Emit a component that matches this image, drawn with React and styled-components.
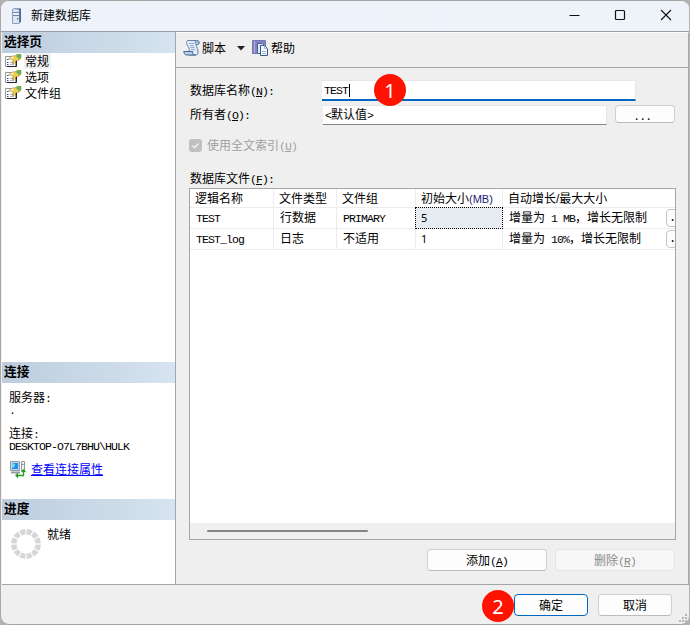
import React from "react";
import styled, { createGlobalStyle, css } from "styled-components";

const GlobalStyle = createGlobalStyle`
  * { box-sizing: border-box; }
  body { margin: 0; background: #b5b1ae; overflow: hidden; }
`;

const Window = styled.div`
  position: relative;
  width: 690px;
  height: 625px;
  display: flex;
  flex-direction: column;
  padding: 0 0 0 1px;
  border: 1px solid #a5a5a5;
  border-left-color: #aea6a3;
  border-right-color: #b4b4b8;
  border-radius: 9px;
  background: #efefef;
  overflow: hidden;
  font: 12px/16px "Noto Sans CJK SC", sans-serif;
  color: #000;
`;

const TitleBar = styled.header`
  height: 31px;
  flex: none;
  display: flex;
  align-items: center;
  padding-left: 8px;
  margin-left: -1px;
  background: linear-gradient(90deg, #eef3fb, #edf3f9);
  border-bottom: 1px solid #9a9da5;
`;

const Title = styled.h1`
  margin: 0 auto 3px 8px;
  font-size: 12px;
  line-height: 16px;
  font-weight: 400;
`;

const WindowControl = styled.button`
  width: 46px;
  height: 30px;
  padding: 0;
  margin: 0 0 2px;
  border: 0;
  background: none;
  display: grid;
  place-items: center;
`;

const Body = styled.div`
  display: flex;
  height: 553px;
  flex: none;
  border-bottom: 1px solid #a5a5a5;
`;

const Sidebar = styled.aside`
  width: 174px;
  flex: none;
  display: flex;
  flex-direction: column;
  background: #fff;
  border-right: 1px solid #a5a5a5;
`;

const SideHeader = styled.h2`
  margin: 0;
  height: 21px;
  flex: none;
  padding-left: 2px;
  background: linear-gradient(90deg, #bdcddd, #d6e3f0);
  font-size: 12.7px;
  line-height: 18px;
  font-weight: 700;
`;

const PageList = styled.ul`
  list-style: none;
  margin: 0;
  padding: 0 0 0 3px;
  height: 309px;
`;

const PageItem = styled.li`
  display: flex;
  align-items: center;
  gap: 2px;
  height: 16px;
  span {
    padding: 0 2px 0 1px;
    line-height: 16px;
    background: ${(p) => (p.$active ? "#f0f0f0" : "transparent")};
  }
`;

const ConnectionInfo = styled.div`
  height: 116px;
  padding: 8px 7px 0;
`;

const InfoLine = styled.div`
  height: ${(p) => p.$h || 12}px;
  line-height: 12px;
  white-space: nowrap;
`;

const ConnectionLink = styled.a`
  display: flex;
  align-items: center;
  gap: 5px;
  margin-top: 9px;
  color: #0000ff;
  text-decoration: none;
  span {
    line-height: 13px;
    border-bottom: 1px solid #0000ff;
  }
`;

const ProgressInfo = styled.div`
  display: flex;
  padding: 6px 8px;
  gap: 5px;
  svg { margin-top: 2px; }
`;

const Main = styled.main`
  width: 513px;
  flex: none;
  border-top: 1px solid #fcfcfc;
  border-right: 1px solid #a9a9ae;
`;

const Toolbar = styled.div`
  height: 35px;
  display: flex;
  align-items: center;
  padding: 0 0 4px 7px;
  border-bottom: 1px solid #a5a5a5;
`;

const ToolText = styled.span`
  margin-left: 1px;
  line-height: 16px;
`;

const DropArrow = styled.svg`
  margin: 1px 7px 0 11px;
`;

const Form = styled.form`
  padding: 12px 0 0 13px;
`;

const FieldRow = styled.div`
  display: flex;
  height: ${(p) => p.$h}px;
`;

const Label = styled.label`
  width: 133px;
  flex: none;
  padding: ${(p) => p.$top || 2}px 0 0 1px;
  white-space: nowrap;
`;

const TextBox = styled.div`
  width: ${(p) => (p.$focused ? 314 : 284)}px;
  height: ${(p) => (p.$focused ? 21 : 20)}px;
  margin-left: ${(p) => (p.$focused ? 0 : 1)}px;
  padding-left: 2px;
  display: flex;
  background: #fff;
  line-height: ${(p) => (p.$focused ? 16 : 15)}px;
  border: solid #e4e6ea;
  border-width: ${(p) => (p.$focused ? "1px 1px 2px 0" : "1px 1px 1px 0")};
  border-bottom-color: ${(p) => (p.$focused ? "#0067c0" : "#858585")};
`;

const Caret = styled.i`
  display: inline-block;
  width: 1px;
  height: 13px;
  margin-left: 1px;
  vertical-align: -3px;
  background: #000;
`;

const Latin = styled.span`
  font-family: "Liberation Mono", monospace;
  font-size: 11.5px;
  letter-spacing: -0.9px;
  line-height: 1;
  text-decoration: ${(p) => (p.$key ? "underline" : "none")};
`;

const PushButton = styled.button`
  width: ${(p) => p.$w}px;
  height: ${(p) => p.$h || 22}px;
  padding: 0;
  border: 1px solid #d0d0d0;
  border-bottom-color: #bcbcbc;
  border-radius: 4px;
  background: #fdfdfd;
  font: 12px/16px "Noto Sans CJK SC", sans-serif;
  color: #000;
  white-space: nowrap;
  ${(p) => p.$primary && css`border-color: #0067c0;`}
  ${(p) => p.$off && css`
    color: #8b8b8b;
    background: #f6f6f6;
    border-color: #e5e5e5;
  `}
`;

const BrowseButton = styled(PushButton)`
  margin-left: 8px;
  letter-spacing: 2.7px;
  line-height: 14px;
  padding: 1px 2px 0 0;
`;

const CheckRow = styled.div`
  display: flex;
  align-items: center;
  gap: 5px;
  height: 16px;
  margin-top: 12px;
  color: #a0a0a0;
`;

const GridLabel = styled.div`
  margin: 17px 0 2px 1px;
  height: 16px;
`;

const GridFrame = styled.div`
  width: 487px;
  height: 352px;
  display: flex;
  flex-direction: column;
  border: 1px solid #a5a5a5;
  background: #fff;
  overflow: hidden;
`;

const GridRow = styled.div`
  display: grid;
  grid-template-columns: 84px 63px 79px 87px 172px;
  height: ${(p) => (p.$head ? 19 : 21)}px;
  flex: none;
`;

const Cell = styled.div`
  position: relative;
  padding-left: ${(p) => p.$pad || 5}px;
  line-height: ${(p) => (p.$head ? 17 : 18)}px;
  white-space: nowrap;
  overflow: hidden;
  border: solid #ececec;
  border-width: 0 1px 1px 0;
  &:last-child { border-right: 0; }
  ${(p) => p.$selected && css`
    margin: -1px 0 0 -1px;
    border: 1px dotted #000;
    background: #e6ecf1;
    padding-left: 5px;
  `}
`;

const Sans = styled.span`
  font-family: ${(p) => (p.$number ? '"Noto Sans"' : '"Liberation Sans"')}, sans-serif;
  font-size: ${(p) => p.$size || 12}px;
  color: ${(p) => p.$color || "#000"};
`;

const CellButton = styled.button`
  position: absolute;
  top: 1px;
  right: -17px;
  width: 26px;
  height: 18px;
  padding: 0 0 0 2px;
  border: 1px solid #c5c5c5;
  border-radius: 4px;
  background: #fdfdfd;
  text-align: left;
  font: 12px/14px "Liberation Mono", monospace;
`;

const ScrollTrack = styled.div`
  margin-top: auto;
  height: 16px;
  padding: 7px 0 0 17px;
  background: #efefef;
`;

const ScrollThumb = styled.div`
  width: 161px;
  height: 2px;
  border-radius: 1px;
  background: #858585;
`;

const GridActions = styled.div`
  display: flex;
  gap: 8px;
  justify-content: flex-end;
  padding: 9px 13px 0 0;
`;

const Footer = styled.footer`
  display: flex;
  gap: 10px;
  justify-content: flex-end;
  padding: 9px 17px 0 0;
`;

const StepBadge = styled.div`
  position: absolute;
  left: ${(p) => p.$x}px;
  top: ${(p) => p.$y}px;
  width: 32px;
  height: 32px;
  border-radius: 50%;
  background: #ff1200;
  color: #fff;
  text-align: center;
  font: 20px/33px "Noto Sans", sans-serif;
`;

const Grip = styled.svg`
  position: absolute;
  right: 1px;
  bottom: 1px;
`;

const Key = ({ k, colon }) => (
  <>
    <Latin>(</Latin><Latin $key>{k}</Latin><Latin>{colon ? "):" : ")"}</Latin>
  </>
);

const ServerIcon = () => (
  <svg width="14" height="18" viewBox="0 0 14 18">
    <defs>
      <linearGradient id="srv" x1="0" x2="1">
        <stop offset="0" stopColor="#e8f0fa" />
        <stop offset=".55" stopColor="#a9bcd6" />
        <stop offset="1" stopColor="#405e88" />
      </linearGradient>
    </defs>
    <path d="M3.5 2.5 5 1.5h6.5V15L10 16.5H3.5Z" fill="url(#srv)" stroke="#8ba0bd" />
    <path d="M4 3h6v13H4z" fill="#dbe6f2" />
    <path d="M4 5.5h6M4 8.500h6" stroke="#6b87ae" />
    <path d="M4 7h6" stroke="#fff" />
    <path d="M8 11h1.5v1.5H8z" fill="#3f9e56" />
    <path d="M11.5 2v13" stroke="#4c6894" />
  </svg>
);

const PageIcon = () => (
  <svg width="17" height="16" viewBox="0 0 17 16">
    <path d="M.5 3.5h10v10H.5z" fill="#fff" stroke="#989898" />
    <path d="M2 6.5h1.5M2 9.5h1.5M2 11.5h1.5" stroke="#344f89" />
    <path d="M5 9.5h4M5 11.5h4" stroke="#b1b8c2" />
    <path d="m3.5 6 3.5-3 3 0 2-1.500h4V5l-2 2-3 1-2.500 3-1.500-1 1.500-3-2-1Z" fill="#f0cc45" stroke="#8b7640" strokeWidth=".6" />
    <path d="m11 3 2-2h3v3.500l-2 1.500Z" fill="#64b45c" />
    <path d="m5 5.500 2-2 3 .500-3 2Z" fill="#fff4a8" />
    <path d="M11.500 8v5.500H2" fill="none" stroke="#222" />
  </svg>
);

const ScriptIcon = () => (
  <svg width="18" height="18" viewBox="0 0 18 18">
    <path d="M4.5 1.5h10c2.5.5 2.5 4 0 4H13c.5 3 2.5 5 2 8.500-.3 1.500-1 2-2 2H6C4.500 14 7 11 6 9 5 7 2 4.500 4.500 1.500Z" fill="#dfeafa" stroke="#657fa9" />
    <path d="M13 1.500c-1.500 1-1 3 .500 4H15c1.500-1.500 1-4-2-4Z" fill="#a9c2e6" stroke="#657fa9" />
    <path d="M.8 12.500h9c-1 1.500 0 3.500 2.500 3.500H3.500C2 16 .8 14.500.8 12.500Z" fill="#b9cdea" stroke="#486796" />
    <path d="M6 4.500h5M7 6.500h4M7.500 8.500h4M8 10.500h4" stroke="#9aafd0" />
  </svg>
);

const HelpIcon = () => (
  <svg width="18" height="18" viewBox="0 0 18 18">
    <path d="M.5 1.500h13v13H.5z" fill="#8080c2" stroke="#7777b3" />
    <path d="M2.500 2v12" stroke="#b2b2e2" />
    <path d="M5.500 4.500h5l2 2v8h-7z" fill="#dce8f7" stroke="#496894" />
    <path d="M8.500 6.500h4l3 3v7h-7z" fill="#f4f8ff" stroke="#365988" />
    <path d="M12.500 6.500v3h3M10 12.500h4M10 14.500h4" fill="none" stroke="#9cb3d3" />
  </svg>
);

const ConnectionIcon = () => (
  <svg width="17" height="18" viewBox="0 0 17 18">
    <path d="M1.500 1.500h9v9h-9z" fill="#c7d3df" stroke="#8e9dab" />
    <path d="M3 3h6v6H3z" fill="#218ff1" />
    <path d="m3 3 3 1v2L4 8H3Z" fill="#70d6f2" />
    <path d="M2 12.500h9" stroke="#8f9daa" strokeWidth="2" />
    <path d="M12.500 1.500h3v9h-3z" fill="#edf1f3" stroke="#8c9a98" />
    <path d="M13 4.500h2" stroke="#8fa5af" />
    <path d="M7 15.500h7.500V10M12.500 12l2-2 2 2M9 13.500l-2 2 2 2" fill="none" stroke="#269926" strokeWidth="1.300" />
  </svg>
);

const pages = ["常规", "选项", "文件组"];

export default function App() {
  return (
    <>
      <GlobalStyle />
      <Window>
        <TitleBar>
          <ServerIcon />
          <Title>新建数据库</Title>
          <WindowControl aria-label="最小化">
            <svg width="12" height="12"><path d="M1.5 6.5h10" stroke="#111" /></svg>
          </WindowControl>
          <WindowControl aria-label="最大化">
            <svg width="12" height="12"><rect x="1.5" y="1.5" width="9" height="9" rx="1" fill="none" stroke="#111" strokeWidth="1.2" /></svg>
          </WindowControl>
          <WindowControl aria-label="关闭">
            <svg width="12" height="12"><path d="m1 1 10 10M11 1 1 11" stroke="#111" strokeWidth="1.1" /></svg>
          </WindowControl>
        </TitleBar>

        <Body>
          <Sidebar>
            <SideHeader>选择页</SideHeader>
            <PageList>
              {pages.map((name, i) => (
                <PageItem key={name} $active={i === 0}><PageIcon /><span>{name}</span></PageItem>
              ))}
            </PageList>
            <SideHeader>连接</SideHeader>
            <ConnectionInfo>
              <InfoLine>服务器<Latin>:</Latin></InfoLine>
              <InfoLine $h={24}><Latin>.</Latin></InfoLine>
              <InfoLine>连接<Latin>:</Latin></InfoLine>
              <InfoLine><Latin>DESKTOP-O7L7BHU\HULK</Latin></InfoLine>
              <ConnectionLink><ConnectionIcon /><span>查看连接属性</span></ConnectionLink>
            </ConnectionInfo>
            <SideHeader>进度</SideHeader>
            <ProgressInfo>
              <svg width="32" height="32" viewBox="0 0 32 32">
                <circle cx="16" cy="16" r="12.2" fill="none" stroke="#d6d6d6" strokeWidth="5.4" pathLength="120" strokeDasharray="8 2" strokeDashoffset="-1" />
              </svg>
              <span>就绪</span>
            </ProgressInfo>
          </Sidebar>

          <Main>
            <Toolbar>
              <ScriptIcon />
              <ToolText>脚本</ToolText>
              <DropArrow width="8" height="5"><path d="M0 0h8L4 4.5Z" fill="#222" /></DropArrow>
              <HelpIcon />
              <ToolText>帮助</ToolText>
            </Toolbar>
            <Form onSubmit={(e) => e.preventDefault()}>
              <FieldRow $h={25}>
                <Label>数据库名称<Key k="N" colon /></Label>
                <TextBox $focused><span><Latin>TEST</Latin><Caret /></span></TextBox>
              </FieldRow>
              <FieldRow $h={20}>
                <Label $top={1}>所有者<Key k="O" colon /></Label>
                <TextBox><span><Latin>&lt;</Latin>默认值<Latin>&gt;</Latin></span></TextBox>
                <BrowseButton type="button" $w={60} $h={18}>...</BrowseButton>
              </FieldRow>
              <CheckRow>
                <svg width="13" height="13">
                  <rect width="13" height="13" rx="3" fill="#c1c1c1" />
                  <path d="m3.5 6.7 2 2 4-4" fill="none" stroke="#fff" strokeWidth="1.1" />
                </svg>
                <span>使用全文索引<Key k="U" /></span>
              </CheckRow>
              <GridLabel>数据库文件<Key k="F" colon /></GridLabel>
              <GridFrame>
                <GridRow $head>
                  <Cell $head>逻辑名称</Cell>
                  <Cell $head>文件类型</Cell>
                  <Cell $head>文件组</Cell>
                  <Cell $head>初始大小<Sans $size={11} $color="#1b1b70">(MB)</Sans></Cell>
                  <Cell $head>自动增长<Sans>/</Sans>最大大小</Cell>
                </GridRow>
                <GridRow>
                  <Cell $pad={6}><Latin>TEST</Latin></Cell>
                  <Cell $pad={6}>行数据</Cell>
                  <Cell $pad={6}><Latin>PRIMARY</Latin></Cell>
                  <Cell $selected><Sans $number $size={11}>5</Sans></Cell>
                  <Cell $pad={6}>增量为<Latin> 1 MB</Latin>，增长无限制<CellButton>.</CellButton></Cell>
                </GridRow>
                <GridRow>
                  <Cell $pad={6}><Latin>TEST_log</Latin></Cell>
                  <Cell $pad={6}>日志</Cell>
                  <Cell $pad={6}>不适用</Cell>
                  <Cell $pad={5}><Sans $number $size={11}>1</Sans></Cell>
                  <Cell $pad={6}>增量为<Latin> 10%</Latin>，增长无限制<CellButton>.</CellButton></Cell>
                </GridRow>
                <ScrollTrack><ScrollThumb /></ScrollTrack>
              </GridFrame>
              <GridActions>
                <PushButton type="button" $w={120}>添加<Key k="A" /></PushButton>
                <PushButton type="button" $w={120} $off>删除<Key k="R" /></PushButton>
              </GridActions>
            </Form>
          </Main>
        </Body>

        <Footer>
          <PushButton $w={74} $primary>确定</PushButton>
          <PushButton $w={74}>取消</PushButton>
        </Footer>

        <StepBadge $x={373} $y={73}>1</StepBadge>
        <StepBadge $x={481} $y={589}>2</StepBadge>
        <Grip width="9" height="9" fill="#b5b5b5">
          <path d="M6 0h2v2H6zM3 3h2v2H3zM6 3h2v2H6zM0 6h2v2H0zM3 6h2v2H3zM6 6h2v2H6z" />
        </Grip>
      </Window>
    </>
  );
}
